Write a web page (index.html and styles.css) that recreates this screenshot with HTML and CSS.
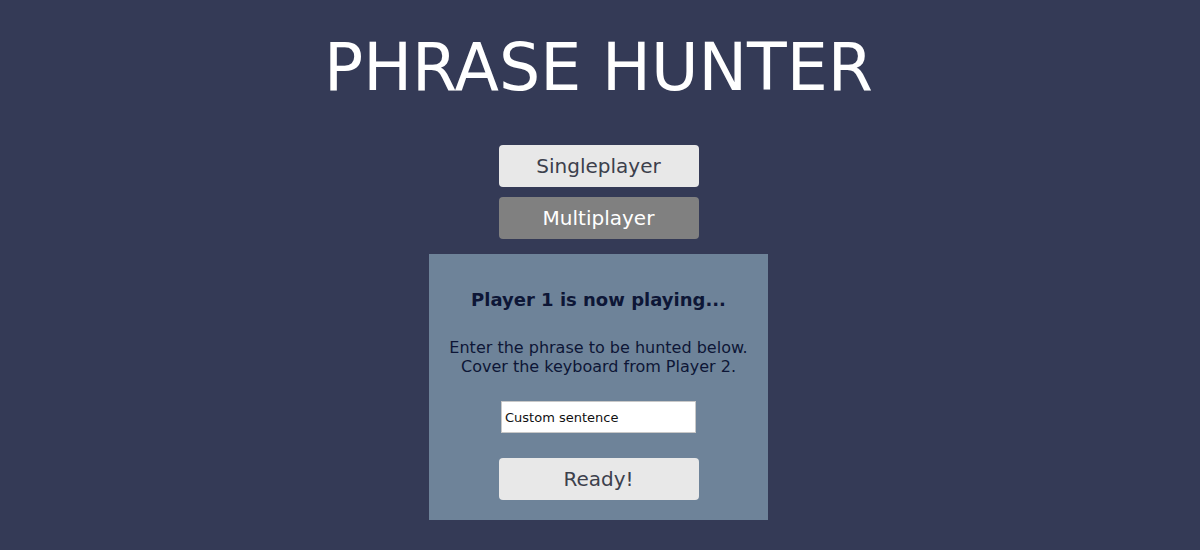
FILE: index.html
```html
<!DOCTYPE html>
<html>
<head>
<meta charset="utf-8">
<link rel="stylesheet" href="styles.css">
</head>
<body>
<div class="page">
  <h1 class="title">PHRASE HUNTER</h1>
  <button class="btn btn-light">Singleplayer</button>
  <button class="btn btn-dark">Multiplayer</button>
  <div class="panel">
    <h2 class="panel-title">Player 1 is now playing...</h2>
    <p class="panel-text">Enter the phrase to be hunted below.<br>Cover the keyboard from Player 2.</p>
    <input class="phrase-input" type="text" value="Custom sentence">
    <button class="btn btn-light btn-ready">Ready!</button>
  </div>
</div>
</body>
</html>
```

FILE: styles.css
```css
html, body {
  margin: 0;
  padding: 0;
  background: #343a56;
  height: 100%;
}
.page {
  display: flex;
  flex-direction: column;
  align-items: center;
  padding-right: 3px;
  font-family: "DejaVu Sans", sans-serif;
}
.title {
  margin: 28px 0 0 0;
  height: 80px;
  line-height: 80px;
  font-size: 65px;
  font-weight: 400;
  color: #ffffff;
  letter-spacing: 0;
}
.btn {
  width: 200px;
  height: 42px;
  border: none;
  border-radius: 4px;
  font-family: "DejaVu Sans", sans-serif;
  font-size: 20px;
  padding: 0;
  cursor: pointer;
}
.btn-light {
  background: #e8e8e8;
  color: #3c404c;
}
.btn-dark {
  background: #808080;
  color: #ffffff;
}
.title + .btn { margin-top: 37px; }
.btn-dark { margin-top: 10px; }
.panel {
  margin-top: 15px;
  width: 339px;
  height: 266px;
  box-sizing: border-box;
  background: #6e8399;
  display: flex;
  flex-direction: column;
  align-items: center;
}
.panel-title {
  margin: 34px 0 0 0;
  font-size: 18px;
  line-height: 24px;
  font-weight: 700;
  color: #0d1636;
}
.panel-text {
  margin: 26px 0 0 0;
  font-size: 16px;
  line-height: 19px;
  text-align: center;
  color: #0d1636;
}
.phrase-input {
  margin-top: 25px;
  width: 195px;
  height: 32px;
  box-sizing: border-box;
  border: 1px solid #c8c8c8;
  background: #ffffff;
  padding: 0 3px;
  font-family: "DejaVu Sans", sans-serif;
  font-size: 13px;
  color: #111111;
  outline: none;
}
.btn-ready {
  margin-top: 25px;
}
```
